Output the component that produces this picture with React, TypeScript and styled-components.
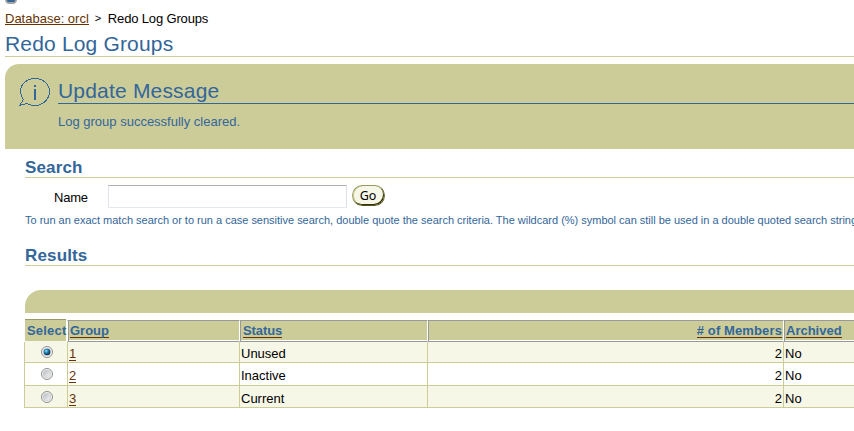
import React from 'react';
import styled, { createGlobalStyle } from 'styled-components';

const BLUE = '#336699';
const OLIVE = '#cccc99';

const GlobalStyle = createGlobalStyle`
  html, body { margin: 0; background: #fff; overflow: hidden; }
  * { box-sizing: border-box; }
  body { font-family: "Liberation Sans", Arial, sans-serif; font-size: 13px; color: #000; }
`;

const Page = styled.main`
  display: flex;
  flex-direction: column;
  width: 854px;
  height: 431px;
  overflow: hidden;
  padding-left: 5px;
`;

const TabTip = styled.svg`
  display: block;
  flex: none;
  width: 12px;
  height: 4px;
`;

const Text = styled.span<{ $space?: number }>`
  letter-spacing: ${(p) => p.$space ?? 0}px;
  white-space: nowrap;
`;

const Breadcrumb = styled.nav`
  display: flex;
  flex: none;
  height: 26px;
  padding-top: 7px;
  line-height: 15px;
  font-size: 13px;
`;

const Link = styled.a<{ $space?: number }>`
  height: 14px;
  line-height: 15px;
  color: #663300;
  letter-spacing: ${(p) => p.$space ?? 0}px;
  border-bottom: 1px solid #663300;
  white-space: nowrap;
`;

const Separator = styled.span`
  width: 19px;
  padding-left: 6px;
  font-size: 11px;
`;

const PageTitle = styled.h1`
  flex: none;
  height: 27px;
  margin: 0;
  padding-top: 2px;
  border-bottom: 1px solid ${OLIVE};
  font-size: 21px;
  font-weight: 400;
  line-height: 24px;
  color: ${BLUE};
`;

const Banner = styled.section`
  display: flex;
  flex: none;
  height: 85px;
  margin-top: 7px;
  padding: 13px 0 0 14px;
  background: ${OLIVE};
  border-top-left-radius: 14px;
  color: ${BLUE};
`;

const BubbleIcon = styled.svg`
  flex: none;
  width: 32px;
  height: 30px;
  margin-right: 7px;
`;

const BannerBody = styled.div`
  flex: 1;
`;

const BannerTitle = styled.h2`
  height: 27px;
  margin: 0;
  padding-top: 2px;
  border-bottom: 1px solid ${BLUE};
  font-size: 21px;
  font-weight: 400;
  line-height: 24px;
`;

const BannerText = styled.p`
  margin: 10px 0 0;
  line-height: 15px;
  font-size: 13px;
`;

const Content = styled.div`
  display: flex;
  flex-direction: column;
  padding-left: 20px;
`;

const SectionTitle = styled.h2<{ $top: number }>`
  flex: none;
  height: 21px;
  margin: ${(p) => p.$top}px 0 0;
  border-bottom: 1px solid ${OLIVE};
  color: ${BLUE};
  font-size: 17px;
  line-height: 22px;
`;

const SearchForm = styled.div`
  display: flex;
  height: 23px;
  margin-top: 7px;
`;

const FieldLabel = styled.label`
  width: 83px;
  padding-left: 29px;
  line-height: 25px;
  letter-spacing: -0.2px;
`;

const SearchInput = styled.input`
  width: 239px;
  height: 23px;
  margin-right: 5px;
  border: 1px solid #e3e9ef;
  border-color: #abadb3 #dbdfe6 #e3e9ef #e2e3ea;
  border-radius: 1px;
  background: #fff;
  outline: none;
`;

const GoButton = styled.button`
  width: 33px;
  height: 21px;
  padding: 0 1px 0 0;
  border: 1px solid #8c8c5a;
  border-color: #99995f #666633 #555522 #99995f;
  border-radius: 11px;
  background: #f7f7e7;
  box-shadow: inset -1px -1px 0 #333300, inset 1px 0 0 #cccc99;
  font-family: "Noto Sans", sans-serif;
  font-size: 12.5px;
  line-height: 18px;
  color: #000;
`;

const Hint = styled.p`
  height: 15px;
  margin: 5px 0 0;
  font-size: 11px;
  line-height: 15px;
  color: ${BLUE};
`;

const TableBar = styled.div`
  height: 23px;
  margin-top: 24px;
  background: ${OLIVE};
  border-top-left-radius: 16px;
`;

const Table = styled.div`
  margin: 6px 0 0 -1px;
`;

const Row = styled.div<{ $height: number; $shade?: boolean }>`
  display: grid;
  grid-template-columns: 43px 172px 188px 356px 1fr;
  height: ${(p) => p.$height}px;
  background: ${(p) => (p.$shade ? '#f7f7e7' : '#fff')};
`;

const SelectHead = styled.div`
  margin: 0 1px;
  padding-left: 2px;
  border-top: 1px solid #999966;
  border-bottom: 1px solid #f7f7e7;
  background: ${OLIVE};
  color: ${BLUE};
  font-weight: 700;
  line-height: 21px;
  letter-spacing: 0.2px;
  white-space: nowrap;
`;

const HeadCell = styled.div<{ $right?: boolean; $indent?: number }>`
  display: flex;
  justify-content: ${(p) => (p.$right ? 'flex-end' : 'flex-start')};
  margin-top: 1px;
  padding: 2px 1px 0 ${(p) => p.$indent ?? 1}px;
  border-left: 1px solid #fff;
  border-top: 1px solid #999;
  border-bottom: 1px solid #999;
  background: ${OLIVE};
  box-shadow: inset 1px 0 0 #999, inset 0 -1px 0 #fff;
`;

const HeadLink = styled.a<{ $space?: number }>`
  height: 15px;
  margin-left: 1px;
  border-bottom: 1px solid #663300;
  color: ${BLUE};
  font-weight: 700;
  line-height: 15px;
  letter-spacing: ${(p) => p.$space ?? 0}px;
  white-space: nowrap;
`;

const Cell = styled.div<{ $align?: string; $bottom: number }>`
  display: flex;
  align-items: flex-end;
  justify-content: ${(p) => p.$align ?? 'flex-start'};
  padding: 0 1px ${(p) => p.$bottom}px;
  border-left: 1px solid ${OLIVE};
  border-bottom: 1px solid ${OLIVE};
  line-height: 15px;
  font-size: 13px;
`;

const GroupLink = styled(Link)`
  height: 15px;
`;

const RadioIcon = styled.svg`
  width: 12px;
  height: 12px;
  margin: 0 0 3px 2px;
`;

function Radio({ checked }: { checked?: boolean }) {
  return (
    <RadioIcon viewBox="0 0 12 12" role="radio" aria-checked={!!checked}>
      <defs>
        <linearGradient id="ring" x1="0" y1="0" x2="1" y2="1">
          <stop offset="0" stopColor="#b9bdc2" />
          <stop offset="1" stopColor="#f6f6f6" />
        </linearGradient>
        <radialGradient id="dot" cx=".38" cy=".35" r=".65">
          <stop offset="0" stopColor="#9be3fa" />
          <stop offset=".45" stopColor="#1c83b5" />
          <stop offset="1" stopColor="#12283f" />
        </radialGradient>
      </defs>
      <circle cx="6" cy="6" r="5.5" fill="#f6f6f6" stroke="#8e8f8f" />
      <circle cx="6" cy="6" r="3.8" fill="url(#ring)" stroke="#c4c7ca" strokeWidth=".7" />
      {checked && <circle cx="6" cy="6" r="3.3" fill="url(#dot)" />}
    </RadioIcon>
  );
}

const groups = [
  { id: 1, status: 'Unused', members: 2, archived: 'No', height: 21, bottom: 1 },
  { id: 2, status: 'Inactive', members: 2, archived: 'No', height: 23, bottom: 2 },
  { id: 3, status: 'Current', members: 2, archived: 'No', height: 22, bottom: 1 },
];

export default function App() {
  return (
    <>
      <GlobalStyle />
      <Page>
        <TabTip viewBox="0 0 12 4">
          <path d="M0 0h12c0 2-2 4-4 4H4C2 4 0 2 0 0z" fill="#a3a3a3" />
          <path d="M2 0h8c0 2-1 2-2 2H4C3 2 2 2 2 0z" fill="#336699" />
        </TabTip>
        <Breadcrumb>
          <Link>Database: orcl</Link>
          <Separator>&gt;</Separator>
          <Text $space={-0.15}>Redo Log Groups</Text>
        </Breadcrumb>
        <PageTitle><Text $space={0.17}>Redo Log Groups</Text></PageTitle>
        <Banner>
          <BubbleIcon viewBox="0 0 32 30" fill="none" stroke={BLUE} shapeRendering="crispEdges">
            <path d="M4.5 22.5C2.5 20 1.5 17 1.5 14.5C1.5 7 8 1.5 16 1.5S30.5 7 30.5 14.5S24 28.5 16 28.5C12.5 28.5 9.5 27.5 7.5 26.5L.5 28.5L4.5 22.5" />
            <path d="M16 8v2M16 12v11" strokeWidth="2" />
          </BubbleIcon>
          <BannerBody>
            <BannerTitle><Text $space={0.19}>Update Message</Text></BannerTitle>
            <BannerText><Text>Log group successfully cleared.</Text></BannerText>
          </BannerBody>
        </Banner>
        <Content>
          <SectionTitle $top={8}><Text $space={0.15}>Search</Text></SectionTitle>
          <SearchForm>
            <FieldLabel htmlFor="name">Name</FieldLabel>
            <SearchInput id="name" />
            <GoButton>Go</GoButton>
          </SearchForm>
          <Hint>
            <Text $space={-0.01}>
              To run an exact match search or to run a case sensitive search, double quote the search criteria. The wildcard (%) symbol can still be used in a double quoted search string.
            </Text>
          </Hint>
          <SectionTitle $top={17}><Text $space={0.15}>Results</Text></SectionTitle>
          <TableBar />
          <Table>
            <Row $height={23}>
              <SelectHead>Select</SelectHead>
              <HeadCell><HeadLink>Group</HeadLink></HeadCell>
              <HeadCell $indent={2}><HeadLink $space={-0.1}>Status</HeadLink></HeadCell>
              <HeadCell $right><HeadLink $space={0.12}>{'# of Members'}</HeadLink></HeadCell>
              <HeadCell><HeadLink>Archived</HeadLink></HeadCell>
            </Row>
            {groups.map((g, i) => (
              <Row key={g.id} $height={g.height} $shade={i % 2 === 0}>
                <Cell $bottom={g.bottom} $align="center"><Radio checked={i === 0} /></Cell>
                <Cell $bottom={g.bottom}><GroupLink>{g.id}</GroupLink></Cell>
                <Cell $bottom={g.bottom}>{g.status}</Cell>
                <Cell $bottom={g.bottom} $align="flex-end">{g.members}</Cell>
                <Cell $bottom={g.bottom}>{g.archived}</Cell>
              </Row>
            ))}
          </Table>
        </Content>
      </Page>
    </>
  );
}
